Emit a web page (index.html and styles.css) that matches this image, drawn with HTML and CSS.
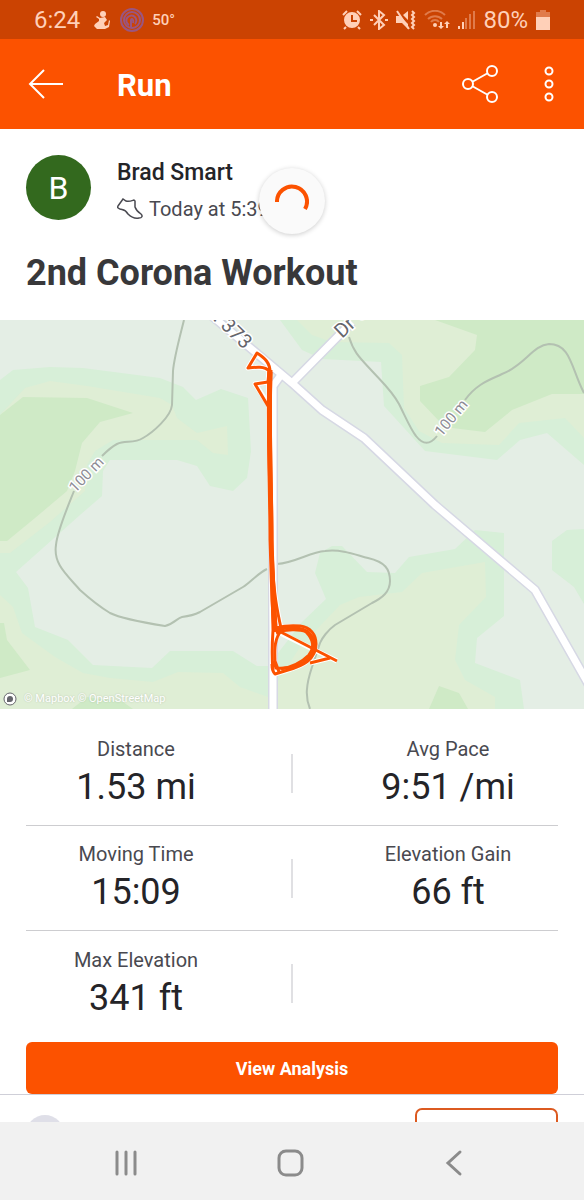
FILE: index.html
```html
<!DOCTYPE html>
<html lang="en">

<head>
  <meta charset="UTF-8">
  <meta name="viewport" content="width=device-width, initial-scale=1.0">
  <title>Run</title>
  <link rel="stylesheet" href="styles.css">
</head>

<body>
  <div class="status-bar">
    <span class="clock">6:24</span>
    <svg class="icon-fitness" width="18" height="20" viewBox="0 0 18 20">
      <circle cx="10" cy="4" r="3"/>
      <path d="M4 6l3 2 5-1 2 3-3 3 1 3 3-1 1-5 1 1-1 6-4 2H4l-3-3 1-2 4-3V9L3 7z"/>
    </svg>
    <svg class="icon-ring" width="24" height="24" viewBox="0 0 24 24">
      <circle cx="12" cy="12" r="11"/>
      <circle cx="12" cy="12" r="8"/>
      <path d="M9 17a5 5 0 1 1 6-1M11 20v-8a1 2 0 1 1 2 3"/>
    </svg>
    <span class="temp">50°</span>
    <div class="status-right">
      <svg width="20" height="20" viewBox="0 0 20 20">
        <path class="line" d="M1 5l4-4M19 5l-4-4M4 17l-2 2M16 17l2 2"/>
        <path class="fill" fill-rule="evenodd" d="M10 2a8 8 0 1 0 0 16 8 8 0 0 0 0-16zM9 5h2v5h4v2H9z"/>
      </svg>
      <svg width="18" height="20" viewBox="0 0 18 20">
        <path class="line" d="M4 5l10 10-5 4V1l5 4L4 15M0 10h3M15 10h3"/>
      </svg>
      <svg width="20" height="20" viewBox="0 0 20 20">
        <path class="fill" d="M0 6h4l8 8v5l-6-6H0zM7 5l5-4v9z"/>
        <path class="line" d="M1 1l12 18M16 1l2 2-2 2 2 2-2 2 2 2-2 2 2 2-2 2 2 2"/>
      </svg>
      <svg width="26" height="20" viewBox="0 0 26 20">
        <path class="line faint" d="M1 5a14 14 0 0 1 20 0M4 9a10 10 0 0 1 14 0"/>
        <path class="line faint" d="M7 12a5 5 0 0 1 8 0"/>
        <circle class="fill" cx="11" cy="15" r="2"/>
        <path class="fill" d="M16 12h2v4h2l-3 3-3-3h2zM22 18h2v-4h2l-3-3-3 3h2z"/>
      </svg>
      <svg width="17" height="20" viewBox="0 0 17 20">
        <path class="line" d="M1 19v-3M5 19v-7"/>
        <path class="line faint" d="M8 19V8M12 19V4M16 19V1"/>
      </svg>
      <span class="battery">80%</span>
      <svg width="14" height="20" viewBox="0 0 14 20">
        <path class="fill faint" d="M4 0h6v2h4v5H0V2h4z"/>
        <path class="fill" d="M0 7h14v13H0z"/>
      </svg>
    </div>
  </div>

  <header class="app-bar">
    <button class="icon-btn" aria-label="Back">
      <svg width="36" height="32" viewBox="0 0 36 32">
        <path d="M35 16H2M16 2L2 16l14 14"/>
      </svg>
    </button>
    <h1>Run</h1>
    <button class="icon-btn" aria-label="Share">
      <svg width="38" height="40" viewBox="0 0 38 40">
        <circle cx="6" cy="20" r="5"/>
        <circle cx="30" cy="7" r="5"/>
        <circle cx="30" cy="33" r="5"/>
        <path d="M10 18l16-9M10 22l16 9"/>
      </svg>
    </button>
    <button class="icon-btn" aria-label="More options">
      <svg width="10" height="36" viewBox="0 0 10 36">
        <circle cx="5" cy="5" r="3.5"/>
        <circle cx="5" cy="18" r="3.5"/>
        <circle cx="5" cy="31" r="3.5"/>
      </svg>
    </button>
  </header>

  <main class="content">
    <div class="spinner">
      <svg width="34" height="34" viewBox="0 0 34 34">
        <path d="M2 18A15 15 0 1 1 30 25"/>
      </svg>
    </div>

    <section class="athlete">
      <div class="avatar">B</div>
      <div class="athlete-info">
        <p class="athlete-name">Brad Smart</p>
        <p class="athlete-time">
          <svg width="26" height="22" viewBox="0 0 26 22">
            <path d="M1 8L6 1l3 2c3 1 5 0 8-1l1 1v6c1 3 3 5 6 7 2 2 1 4-2 4-5 1-8-1-11-4-3-5-5-4-8-5-2-1-3-1-2-3z"/>
          </svg>
          Today at 5:39 PM
        </p>
      </div>
    </section>

    <h2 class="title">2nd Corona Workout</h2>

    <div class="map">
      <svg viewBox="0 0 584 389">
        <rect class="land" width="584" height="389"/>
        <!-- vegetation, light to dark -->
        <g class="mint">
          <path d="M0 60L13 50 50 47 83 48 160 58 183 67 196 80 221 69 248 78 251 131 247 158 233 171 210 166 197 146 177 140H110L103 151 102 176 80 195 16 252 28 268 35 307 68 320 93 345 152 348 170 331H233L257 346H268L302 302 326 279 315 253 320 233 332 226 342 226 367 252 395 253 409 237 455 229 475 210 504 213V296L477 318 475 343 520 360 524 389H0z"/>
          <path d="M280 0L302 30 322 39 381 42 384 86 425 131 497 140 520 120 547 113 584 145V0z"/>
          <path d="M584 209L567 210 552 221V250L574 267 584 284z"/>
        </g>
        <g class="meadow">
          <path d="M0 95L25 68 50 61 87 66 160 78 172 85 177 98 197 113 227 106 228 135 213 133 197 120 113 120 95 131 87 145 85 171 50 202 10 233H0z"/>
          <path d="M0 275L13 287 22 313 55 337 83 353 110 358 153 362 178 352 223 353 240 367 268 377 300 327 340 285 359 277 402 272 422 253 485 242 486 277 459 305 455 340 465 360 495 377V389H0z"/>
          <path d="M297 0L312 15 332 22 389 23 402 35 404 88 419 111 442 123 499 125 519 103 565 98 584 118V0z"/>
        </g>
        <g class="wood">
          <path d="M0 95L23 77 87 78 133 93 100 102 82 123 75 151 67 171 35 198 7 221H0z"/>
          <path d="M0 303H4L7 320 30 350 0 358z"/>
          <path d="M72 389L87 377 123 382 133 389z"/>
          <path d="M429 389L439 366 459 373 468 389z"/>
          <path d="M435 0L477 15 475 30 449 57 420 66V81L439 101 452 108 485 112 512 90 552 74H584V0z"/>
        </g>
        <g class="contour">
          <path d="M184 0C179 20 174 38 173 51L172 85C171 97 152 113 143 118 134 124 125 120 117 124 111 127 107 131 102 136M74 171C66 191 57 212 56 225 53 244 67 255 80 270 90 279 100 287 110 293 122 299 146 303 165 306 174 304 177 298 182 297 190 296 194 295 200 292L243 267C250 263 258 253 267 249M277 244C295 243 310 232 325 231 343 229 356 235 368 238 385 242 390 249 390 261 390 272 382 278 372 283L335 305C328 310 322 318 320 323L312 347C306 365 305 377 310 389"/>
          <path d="M349 17C354 33 360 38 372 51 384 64 392 71 399 84 406 98 411 110 416 116 423 125 430 125 437 116M465 80C477 63 492 59 502 54 524 46 533 25 549 24 571 24 571 48 584 73"/>
        </g>
        <g class="road-case">
          <path d="M205-10L292 63 322 90 364 118 435 185 535 270 590 367M292 63L352 2M281 55L273 66V392"/>
        </g>
        <g class="road">
          <path d="M205-10L292 63 322 90 364 118 435 185 535 270 590 367M292 63L352 2M281 55L273 66V392"/>
        </g>
        <g class="labels">
          <text class="road-label" text-anchor="end" transform="translate(244 30) rotate(44)">Rd. 373</text>
          <text class="road-label" transform="translate(342 19) rotate(-43)">Dr C</text>
          <text class="height-label" text-anchor="middle" transform="translate(90 158) rotate(-46)">100 m</text>
          <text class="height-label" text-anchor="middle" transform="translate(455 101) rotate(-50)">100 m</text>
        </g>
        <g class="route-case">
          <path d="M269 52C268 100 271 160 271 220L273 345"/>
          <path d="M270 52C270 43 265 38 257 33L248 48C256 47 265 46 269 51L268 62 255 64 267 82"/>
          <path d="M272 240C274 275 277 290 281 308M276 308C290 305 306 306 313 318 321 338 302 346 288 350L275 354 274 310 337 341M330 338L310 343"/>
        </g>
        <g class="route">
          <path d="M269 50C267 100 270 160 271 220L273 310C272 325 272 340 273 350"/>
          <path d="M271 50C269 110 272 170 272 230L276 308C283 306 290 305 300 306 310 307 316 314 316 324 316 340 302 346 288 350L275 354C273 352 272 348 272 344"/>
          <path class="main-line" d="M270 52C268 110 271 170 271 220L273 280 275 312"/>
          <path d="M276 310C288 307 300 307 307 311 315 317 317 329 310 337 303 345 291 349 276 348L274 341"/>
          <path d="M276 313C286 309 300 309 306 312 313 319 315 327 309 335 302 342 292 347 281 349"/>
          <path d="M282 310C273 319 275 334 275 341L279 352"/>
          <path d="M270 52C270 43 265 38 257 33L248 48C256 47 265 46 269 51L268 62 255 64 268 86"/>
          <path d="M272 240C274 275 277 290 281 308M275 309L337 341M330 338L310 343"/>
        </g>
      </svg>
      <p class="attribution">
        <svg width="14" height="14" viewBox="0 0 14 14">
          <circle cx="7" cy="7" r="6"/>
          <path d="M4 10V7a3 3 0 1 1 3 3z"/>
        </svg>
        © Mapbox © OpenStreetMap
      </p>
    </div>

    <section class="stats">
      <div class="stats-row">
        <div class="stat"><p class="stat-label">Distance</p><p class="stat-value">1.53 mi</p></div>
        <div class="stat"><p class="stat-label">Avg Pace</p><p class="stat-value">9:51 /mi</p></div>
      </div>
      <div class="stats-row">
        <div class="stat"><p class="stat-label">Moving Time</p><p class="stat-value">15:09</p></div>
        <div class="stat"><p class="stat-label">Elevation Gain</p><p class="stat-value">66 ft</p></div>
      </div>
      <div class="stats-row">
        <div class="stat"><p class="stat-label">Max Elevation</p><p class="stat-value">341 ft</p></div>
        <div class="stat"></div>
      </div>
      <button class="analysis-btn">View Analysis</button>
    </section>

    <section class="kudos">
      <div class="kudos-avatar"></div>
      <button class="kudos-btn" aria-label="Give kudos"></button>
    </section>
  </main>

  <nav class="nav-bar">
    <button aria-label="Recent apps">
      <svg width="28" height="28" viewBox="0 0 28 28"><path d="M5 3v22M14 3v22M23 3v22"/></svg>
    </button>
    <button aria-label="Home">
      <svg width="28" height="28" viewBox="0 0 28 28"><rect x="3" y="2" width="23" height="24" rx="7"/></svg>
    </button>
    <button aria-label="Back">
      <svg width="28" height="28" viewBox="0 0 28 28"><path d="M20 3L8 14l12 11"/></svg>
    </button>
  </nav>
</body>

</html>
```
FILE: styles.css
```css
* {
  margin: 0;
  padding: 0;
  box-sizing: border-box;
}

body {
  display: flex;
  flex-direction: column;
  height: 100vh;
  background: #fff;
  color: #242428;
  font-family: Roboto, "Liberation Sans", sans-serif;
}

button {
  border: 0;
  background: none;
  font: inherit;
  cursor: pointer;
}

svg {
  display: block;
  flex: none;
}

/* status bar */
.status-bar {
  display: flex;
  align-items: center;
  height: 39px;
  padding: 1px 34px 0;
  background: #cb4302;
  color: #ffd0b8;
}

.clock,
.battery {
  font-size: 24px;
  line-height: 24px;
}

.icon-fitness {
  margin-left: 13px;
  fill: #ffd0b8;
}

.icon-ring {
  margin-left: 9px;
  fill: none;
  stroke: #9a5580;
  stroke-width: 2;
}

.temp {
  margin-left: 8px;
  font-size: 15px;
  font-weight: 500;
}

.status-right {
  display: flex;
  align-items: center;
  gap: 8px;
  margin-left: auto;
}

.status-right .fill {
  fill: #ffd0b8;
}

.status-right .line {
  fill: none;
  stroke: #ffd0b8;
  stroke-width: 2;
}

.status-right .faint {
  opacity: 0.4;
}

/* app bar */
.app-bar {
  display: flex;
  align-items: center;
  height: 90px;
  padding: 0 30px 0 28px;
  background: #fc5200;
  color: #fff;
}

.app-bar h1 {
  flex: 1;
  margin-left: 53px;
  padding-top: 4px;
  font-size: 31px;
  font-weight: 700;
  line-height: 36px;
}

.icon-btn svg {
  fill: none;
  stroke: #fff;
  stroke-width: 2;
}

.icon-btn + .icon-btn {
  margin-left: 44px;
}

/* activity */
.content {
  position: relative;
  flex: 1;
  min-height: 0;
  overflow: hidden;
}

.spinner {
  position: absolute;
  top: 39px;
  left: 50%;
  display: flex;
  align-items: center;
  justify-content: center;
  width: 66px;
  height: 66px;
  border-radius: 50%;
  background: #fafafa;
  box-shadow: 0 1px 5px rgba(0, 0, 0, 0.2);
  transform: translateX(-50%);
}

.spinner svg {
  fill: none;
  stroke: #fc5200;
  stroke-width: 4;
}

.athlete {
  display: flex;
  align-items: flex-start;
  gap: 26px;
  padding: 26px 26px 0;
}

.avatar {
  width: 65px;
  height: 65px;
  border-radius: 50%;
  background: #33691e;
  color: #fff;
  font-size: 32px;
  line-height: 66px;
  text-align: center;
}

.athlete-name {
  font-size: 23px;
  font-weight: 500;
  line-height: 36px;
}

.athlete-time {
  display: flex;
  align-items: center;
  gap: 6px;
  color: #494950;
  font-size: 20px;
  line-height: 36px;
}

.athlete-time svg {
  fill: none;
  stroke: #494950;
  stroke-width: 1.5;
}

.title {
  padding: 23px 26px 24px;
  color: #38383a;
  font-size: 36px;
  font-weight: 700;
  line-height: 46px;
}

/* map */
.map {
  position: relative;
}

.map > svg {
  width: 100%;
  height: auto;
}

.land {
  fill: #e4eee5;
}

.mint {
  fill: #d7efd8;
}

.meadow {
  fill: #dfeed5;
}

.wood {
  fill: #cfeac6;
}

.contour,
.road,
.road-case,
.route,
.route-case {
  fill: none;
  stroke-linejoin: round;
}

.contour {
  stroke: #b3c1b1;
  stroke-width: 2;
}

.road-case {
  stroke: #d6d8e4;
  stroke-width: 10;
}

.road {
  stroke: #fff;
  stroke-width: 7;
}

.route-case {
  stroke: #fff;
  stroke-width: 5;
}

.route {
  stroke: #fc5200;
  stroke-width: 3;
}

.main-line {
  stroke-width: 5;
}

.labels text {
  stroke: #fff;
  stroke-width: 3;
  paint-order: stroke;
}

.road-label {
  fill: #65656c;
  font-size: 20px;
}

.height-label {
  fill: #8d8c95;
  font-size: 15px;
}

.attribution {
  position: absolute;
  bottom: 3px;
  left: 3px;
  display: flex;
  align-items: center;
  gap: 7px;
  color: #fff;
  font-size: 11px;
  line-height: 14px;
  text-shadow: 0 0 2px rgba(0, 0, 0, 0.2);
}

.attribution circle {
  fill: #fff;
  stroke: #65656c;
}

.attribution path {
  fill: #65656c;
}

/* stats */
.stats {
  padding: 12px 26px 0;
}

.stats-row {
  display: flex;
  align-items: center;
  gap: 45px;
  height: 105px;
  border-bottom: 1px solid #cdcdd0;
}

.stats-row:nth-child(3) {
  border-bottom: 0;
}

.stat {
  flex: 1;
  text-align: center;
}

/* short rule between the two columns */
.stats-row::before {
  content: "";
  order: 1;
  width: 2px;
  height: 39px;
  background: #e0e0e3;
}

.stat:last-child {
  order: 2;
}

.stat-label {
  color: #494950;
  font-size: 20px;
  line-height: 28px;
}

.stat-value {
  font-size: 36px;
  line-height: 48px;
}

.analysis-btn {
  display: block;
  width: 100%;
  height: 52px;
  margin-top: 6px;
  border-radius: 6px;
  background: #fc5200;
  color: #fff;
  font-size: 18px;
  font-weight: 700;
}

/* kudos */
.kudos {
  display: flex;
  align-items: center;
  justify-content: space-between;
  padding: 13px 26px;
  border-top: 1px solid #cfcfd8;
}

.kudos-avatar {
  width: 38px;
  height: 38px;
  border-radius: 50%;
  background: #dfdfe8;
}

.kudos-btn {
  width: 143px;
  height: 52px;
  border: 2px solid #dc5a20;
  border-radius: 7px;
}

/* system navigation */
.nav-bar {
  display: flex;
  align-items: center;
  justify-content: space-around;
  height: 78px;
  padding: 4px 48px 0 44px;
  background: #f1f1f1;
}

.nav-bar svg {
  fill: none;
  stroke: #8b8b8b;
  stroke-width: 3;
  stroke-linecap: round;
}
```
